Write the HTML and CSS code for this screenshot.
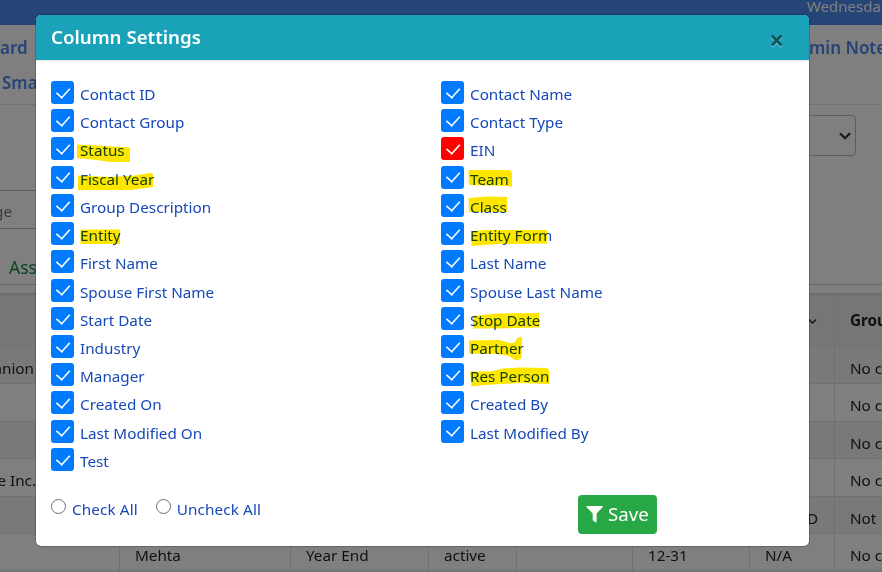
FILE: index.html
```
<!DOCTYPE html>
<html lang="en">
<head>
<meta charset="utf-8">
<title>Column Settings</title>
<link rel="stylesheet" href="styles.css">
</head>
<body>
<div class="page">
  <div class="topbar">Wednesda</div>
  <div class="nav">
    <div class="nav-row"><span>ard</span><span class="nav-end">min Note</span></div>
    <div class="nav-row second"><span>Sma</span></div>
  </div>
  <div class="filters">
    <div class="select"><svg width="12" height="8" viewBox="0 0 12 8"><path d="M1 1.200l5 5 5-5" fill="none" stroke="#333" stroke-width="2.300"/></svg></div>
  </div>
  <div class="search">ge</div>
  <div class="tabs">Ass</div>
  <div class="table">
    <div class="tr th"><div></div><div></div><div></div><div></div><div></div><div></div><div class="sort"><svg width="10" height="7" viewBox="0 0 10 7"><path d="M1 1.500l3.500 3.500L8 1.500" fill="none" stroke="#222" stroke-width="1.400"/></svg></div><div>Grou</div></div>
    <div class="tr odd"><div class="name">anion</div><div></div><div></div><div></div><div></div><div></div><div></div><div>No c</div></div>
    <div class="tr"><div></div><div></div><div></div><div></div><div></div><div></div><div></div><div>No c</div></div>
    <div class="tr odd"><div></div><div></div><div></div><div></div><div></div><div></div><div></div><div>No c</div></div>
    <div class="tr"><div class="name inc">e Inc.</div><div></div><div></div><div></div><div></div><div></div><div></div><div>No c</div></div>
    <div class="tr odd"><div></div><div></div><div></div><div></div><div></div><div></div><div class="end">D</div><div>Not</div></div>
    <div class="tr"><div></div><div>Mehta</div><div>Year End</div><div>active</div><div></div><div>12-31</div><div>N/A</div><div>No c</div></div>
    <div class="tr odd"><div></div><div></div><div></div><div></div><div></div><div></div><div></div><div></div></div>
  </div>
</div>
<div class="backdrop">
  <div class="modal">
    <div class="modal-header"><h1>Column Settings</h1><span class="close">×</span></div>
    <div class="modal-body">
      <div class="columns">
        <ul>
          <li><i class="check"></i><span>Contact ID</span></li>
          <li><i class="check"></i><span>Contact Group</span></li>
          <li><i class="check"></i><span>Status</span></li>
          <li><i class="check"></i><span>Fiscal Year</span></li>
          <li><i class="check"></i><span>Group Description</span></li>
          <li><i class="check"></i><span>Entity</span></li>
          <li><i class="check"></i><span>First Name</span></li>
          <li><i class="check"></i><span>Spouse First Name</span></li>
          <li><i class="check"></i><span>Start Date</span></li>
          <li><i class="check"></i><span>Industry</span></li>
          <li><i class="check"></i><span>Manager</span></li>
          <li><i class="check"></i><span>Created On</span></li>
          <li><i class="check"></i><span>Last Modified On</span></li>
          <li><i class="check"></i><span>Test</span></li>
        </ul>
        <ul>
          <li><i class="check"></i><span>Contact Name</span></li>
          <li><i class="check"></i><span>Contact Type</span></li>
          <li><i class="check red"></i><span>EIN</span></li>
          <li><i class="check"></i><span>Team</span></li>
          <li><i class="check"></i><span>Class</span></li>
          <li><i class="check"></i><span>Entity Form</span></li>
          <li><i class="check"></i><span>Last Name</span></li>
          <li><i class="check"></i><span>Spouse Last Name</span></li>
          <li><i class="check"></i><span>Stop Date</span></li>
          <li><i class="check"></i><span>Partner</span></li>
          <li><i class="check"></i><span>Res Person</span></li>
          <li><i class="check"></i><span>Created By</span></li>
          <li><i class="check"></i><span>Last Modified By</span></li>
        </ul>
      </div>
      <div class="footer">
        <label class="radio"><i></i><span>Check All</span></label>
        <label class="radio"><i></i><span>Uncheck All</span></label>
        <div class="save"><svg width="17" height="17" viewBox="0 0 17 17"><path d="M1 0h15.200q1 .5.3 1.300L10.600 7.500V15.800q-.4 1-1.300.5L6.700 14.300V7.500L.6 1.300Q0 .4 1 0z" fill="#fff"/></svg><span>Save</span></div>
      </div>
    </div>
  </div>
</div>
<svg class="marker" width="882" height="572" viewBox="0 0 882 572">
  <path d="M77 144.500L97 145.500 130 147.500V162L110 162 97 160 80 158.500H77z"/>
  <path d="M78 175.500L110 177 135 175.500 150 173 153 174V187L130 190H78z"/>
  <path d="M80.500 229.500H120V244H80.500z"/>
  <path d="M468.500 170H508Q512 170.500 512 174V187L507 186 469 185z"/>
  <path d="M468.500 198L488 196.500 507 197V212H469z"/>
  <path d="M471.500 231.500L485 230 547 230V243.500L497 244 471.500 246z"/>
  <path d="M473 316L497 313.500 539 313V327.500L497 328.500H473z"/>
  <path d="M469 340.500L499 340 510 343Q516 344 517 338L522 336.500 521.500 358Q520 360.500 515 360L509 356 497 354 469 353.500z"/>
  <path d="M470 371.500L491 371.500 503 368.500 520 367.500 547 368 549 370V384L520 383 485 385 471.500 386.500z"/>
</svg>
</body>
</html>
```
FILE: styles.css
```
* { box-sizing: border-box; }
body {
  margin: 0;
  width: 882px;
  height: 572px;
  overflow: hidden;
  position: relative;
  background: #fff;
  font: 15.250px/20px "Noto Sans", "Open Sans", sans-serif;
  color: #222;
}
.page { height: 572px; overflow: hidden; }
.topbar { height: 25px; background: #4c8aee; color: #fff; padding: 0 0 0 807px; line-height: 12px; font-size: 15px; white-space: nowrap; }
.nav { height: 80px; padding-top: 10px; border-bottom: 1px solid #e4e4e4; color: #4c86ee; font-size: 17px; font-weight: 600; }
.nav-row { display: flex; justify-content: space-between; height: 36px; line-height: 26px; white-space: nowrap; }
.nav-row.second { padding-left: 2px; line-height: 23px; }
.nav-end { width: 73px; }
.filters { height: 85px; padding: 10px 0 0 600px; }
.select { width: 256px; height: 41px; border: 1px solid #bbb; border-radius: 4px; display: flex; align-items: center; justify-content: flex-end; padding-right: 4px; }
.search { width: 500px; height: 39px; border: solid #bbb; border-width: 1px 0; line-height: 40px; color: #777; text-indent: -6px; }
.tabs { height: 56px; padding-left: 9px; line-height: 76px; font-size: 17.500px; color: #168a40; border-bottom: 1px solid #ccc; }
.table { margin-top: 8px; width: 1000px; border-top: 2px solid #d9dce0; }
.tr { display: grid; grid-template-columns: 120px 171px 138px 88px 116px 117px 85px 165px; grid-template-rows: 37.400px; height: 37.400px; }
.tr > div { height: 100%; border-right: 1px solid #dee2e6; border-bottom: 1px solid #dee2e6; padding-left: 15px; line-height: 42px; white-space: nowrap; }
.tr.th { grid-template-rows: 52px; height: 52px; background: #e9ecef; font-weight: 700; }
.tr.th > div { line-height: 51px; border-bottom: 0; }
.tr > .sort { padding-left: 58px; }
.sort svg { vertical-align: middle; }
.odd { background: #f2f2f2; }
.tr > .name { padding-left: 0; display: flex; justify-content: flex-end; padding-right: 85px; }
.tr > .inc { padding-right: 83px; }
.tr > .end { padding-left: 57px; }
.backdrop { position: absolute; inset: 0; background: rgba(0, 0, 0, .5); padding: 14px 0 0 35px; }
.modal { width: 775px; height: 533px; background: #fff; background-clip: padding-box; border: 1px solid rgba(0, 0, 0, .2); border-radius: 6px; overflow: hidden; }
.modal-header { height: 46px; background: #1aa2b8; border-bottom: 1px solid #e5e9ec; display: flex; justify-content: space-between; padding: 0 25px 0 15px; }
h1 { margin: 0; color: #fff; font-size: 18.700px; font-weight: 600; line-height: 44px; }
.close { font-size: 26px; font-weight: 700; line-height: 51px; color: #0d515c; text-shadow: 0 1px 0 #8fd0db; }
.modal-body { padding: 20px 0 0 15px; }
.columns { display: grid; grid-template-columns: 390px 368px; height: 402px; align-items: start; }
ul { list-style: none; margin: 0; padding: 0; }
li { display: flex; gap: 6px; height: 28.230px; color: #1648b8; white-space: nowrap; }
li span { line-height: 27.700px; }
.check { width: 23px; height: 23px; border-radius: 3px; background: #007bff; display: grid; place-items: center; }
.check.red { background: #f00; }
.check::after { content: ""; width: 14px; height: 7.500px; border: solid #fff; border-width: 0 0 2.500px 2.500px; transform: translate(0, -1.500px) rotate(-48deg) scale(.8); }
.footer { display: flex; height: 50px; align-items: flex-start; padding-top: 12px; color: #1648b8; }
.radio { display: flex; gap: 6px; white-space: nowrap; letter-spacing: .12px; }
.radio + .radio { margin-left: 18px; }
.radio i { width: 15px; height: 15px; margin-top: 4px; border: 1px solid #707070; border-radius: 50%; }
.radio span { line-height: 29px; }
.save { width: 79px; height: 39px; margin-left: auto; margin-right: 152px; background: #28a745; border-radius: 4px; color: #fff; font-size: 18.700px; display: flex; align-items: center; gap: 5px; padding: 0 0 1px 8px; }
.marker { position: absolute; left: 0; top: 0; mix-blend-mode: multiply; fill: #ffe600; }
```
